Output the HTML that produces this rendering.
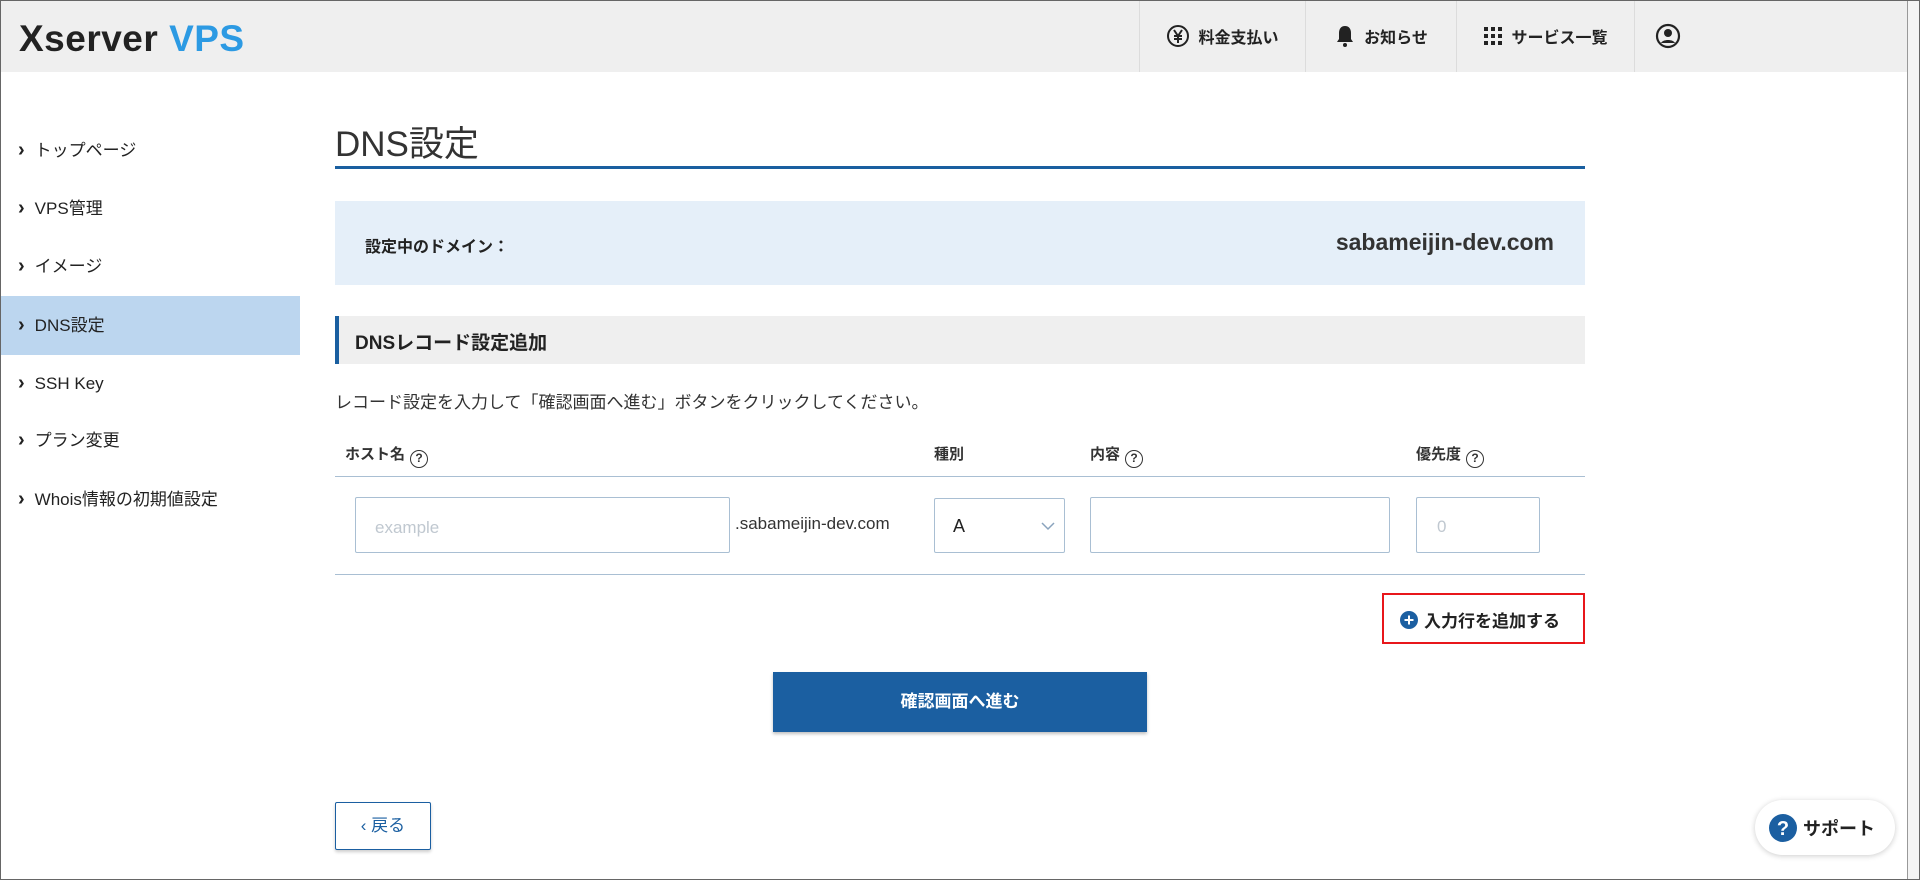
<!DOCTYPE html>
<html><head><meta charset="utf-8"><style>
*{box-sizing:border-box;margin:0;padding:0}
body{width:1920px;height:880px;overflow:hidden;background:#fff;font-family:"Liberation Sans","Noto Sans CJK JP",sans-serif;color:#333;position:relative}
.abs{position:absolute}
.hdr{left:0;top:0;width:1907px;height:72px;background:#efefef}
.logo{left:19px;top:20px;font-size:37px;line-height:37px;font-weight:bold;letter-spacing:0.5px;color:#222}
.logo span{color:#2c9ae3}
.nav{top:0;height:72px;display:flex;align-items:center;justify-content:center;font-size:16px;font-weight:bold;color:#222;border-left:1px solid #dcdcdc;gap:8px}
.side div{position:absolute;left:0;width:300px;height:59px;line-height:59px;padding-left:18px;font-size:17px;color:#222}
.side div:before{content:"›";font-size:20px;margin-right:10px;font-weight:bold}
.q{display:inline-block;width:18px;height:18px;border:1.6px solid #333;border-radius:50%;font-size:12px;line-height:15px;text-align:center;margin-left:5px;vertical-align:-3px}
.inp{border:1px solid #a9bfd3;border-radius:2px;background:#fff}
</style></head><body>
<div class="abs hdr"></div>
<div class="abs logo">Xserver <span>VPS</span></div>
<div class="abs nav" style="left:1139px;width:166px"><svg width="24" height="24" viewBox="0 0 24 24"><circle cx="12" cy="12" r="10" fill="none" stroke="#222" stroke-width="2"/><path d="M8 6l4 6 4-6M12 12v7M8 12h8M8 15h8" stroke="#222" stroke-width="2" fill="none"/></svg>料金支払い</div>
<div class="abs nav" style="left:1305px;width:151px"><svg width="22" height="24" viewBox="0 0 22 24"><path d="M11 2c-4 0-6 3-6 7v6l-2 3h16l-2-3V9c0-4-2-7-6-7z" fill="#222"/><circle cx="11" cy="21" r="2" fill="#222"/></svg>お知らせ</div>
<div class="abs nav" style="left:1456px;width:178px"><svg width="20" height="20" viewBox="0 0 20 20" fill="#222"><rect x="1" y="1" width="4" height="4"/><rect x="8" y="1" width="4" height="4"/><rect x="15" y="1" width="4" height="4"/><rect x="1" y="8" width="4" height="4"/><rect x="8" y="8" width="4" height="4"/><rect x="15" y="8" width="4" height="4"/><rect x="1" y="15" width="4" height="4"/><rect x="8" y="15" width="4" height="4"/><rect x="15" y="15" width="4" height="4"/></svg>サービス一覧</div>
<div class="abs nav" style="left:1634px;width:66px"><svg width="26" height="26" viewBox="0 0 26 26"><circle cx="13" cy="13" r="11" fill="none" stroke="#222" stroke-width="2.2"/><circle cx="13" cy="10" r="4" fill="#222"/><path d="M6 20c2-4 12-4 14 0" fill="#222"/></svg></div>
<div class="abs" style="left:1907px;top:0;width:13px;height:880px;background:#f4f4f4;border-left:1px solid #999"></div>

<div class="side">
<div style="top:121px">トップページ</div>
<div style="top:179px">VPS管理</div>
<div style="top:237px">イメージ</div>
<div style="top:296px;background:#bcd6ef">DNS設定</div>
<div style="top:354px">SSH Key</div>
<div style="top:411px">プラン変更</div>
<div style="top:470px">Whois情報の初期値設定</div>
</div>

<div class="abs" style="left:335px;top:116px;font-size:35px;color:#333">DNS設定</div>
<div class="abs" style="left:335px;top:166px;width:1250px;height:3px;background:#1a5fa0"></div>
<div class="abs" style="left:335px;top:201px;width:1250px;height:84px;background:#e5eff9"></div>
<div class="abs" style="left:365px;top:233px;font-size:16px;font-weight:bold;color:#222">設定中のドメイン：</div>
<div class="abs" style="left:1200px;width:354px;text-align:right;top:229px;font-size:23px;font-weight:bold;color:#333">sabameijin-dev.com</div>
<div class="abs" style="left:335px;top:316px;width:1250px;height:48px;background:#efefef;border-left:4px solid #1a5fa0"></div>
<div class="abs" style="left:355px;top:328px;font-size:19px;font-weight:bold;color:#222">DNSレコード設定追加</div>
<div class="abs" style="left:335px;top:388px;font-size:17px;color:#333">レコード設定を入力して「確認画面へ進む」ボタンをクリックしてください。</div>
<div class="abs" style="left:345px;top:443px;font-size:15px;font-weight:bold">ホスト名<span class="q">?</span></div>
<div class="abs" style="left:934px;top:443px;font-size:15px;font-weight:bold">種別</div>
<div class="abs" style="left:1090px;top:443px;font-size:15px;font-weight:bold">内容<span class="q">?</span></div>
<div class="abs" style="left:1416px;top:443px;font-size:15px;font-weight:bold">優先度<span class="q">?</span></div>
<div class="abs" style="left:335px;top:476px;width:1250px;height:1px;background:#a9bfd3"></div>
<div class="abs inp" style="left:355px;top:497px;width:375px;height:56px;padding:20px 19px;font-size:17px;color:#c0c8d0">example</div>
<div class="abs" style="left:735px;top:514px;font-size:17px;color:#333">.sabameijin-dev.com</div>
<div class="abs inp" style="left:934px;top:498px;width:131px;height:55px;padding:17px 18px;font-size:18px;color:#222">A<svg class="abs" style="left:106px;top:23px" width="14" height="9" viewBox="0 0 14 9"><path d="M1 1l6 6 6-6" stroke="#8aa3bd" stroke-width="1.5" fill="none"/></svg></div>
<div class="abs inp" style="left:1090px;top:497px;width:300px;height:56px"></div>
<div class="abs inp" style="left:1416px;top:497px;width:124px;height:56px;padding:19px 20px;font-size:17px;color:#c0c8d0">0</div>
<div class="abs" style="left:335px;top:574px;width:1250px;height:1px;background:#a9bfd3"></div>
<div class="abs" style="left:1382px;top:593px;width:203px;height:51px;border:2px solid #e8161b"></div>
<div class="abs" style="left:1400px;top:607px;font-size:17px;font-weight:bold;color:#222;display:flex;align-items:center;gap:6px"><svg width="18" height="18" viewBox="0 0 18 18"><circle cx="9" cy="9" r="9" fill="#1b5fa1"/><path d="M9 4.5v9M4.5 9h9" stroke="#fff" stroke-width="2"/></svg>入力行を追加する</div>
<div class="abs" style="left:773px;top:672px;width:374px;height:60px;background:#1b5fa1;color:#fff;font-size:17px;font-weight:bold;text-align:center;line-height:60px;box-shadow:0 2px 3px rgba(0,0,0,.25)">確認画面へ進む</div>
<div class="abs" style="left:335px;top:802px;width:96px;height:48px;border:1px solid #1b5fa1;border-radius:2px;color:#1b5fa1;font-size:17px;text-align:center;line-height:46px;box-shadow:0 2px 3px rgba(0,0,0,.2)">‹ 戻る</div>
<div class="abs" style="left:1755px;top:800px;width:140px;height:55px;border-radius:28px;background:#fff;box-shadow:0 1px 6px rgba(0,0,0,.2);display:flex;align-items:center;padding-left:14px;gap:6px;font-size:18px;font-weight:bold;color:#222"><svg width="28" height="28" viewBox="0 0 28 28"><circle cx="14" cy="14" r="14" fill="#1b5fa1"/><text x="14" y="21" text-anchor="middle" font-size="20" font-weight="bold" fill="#fff" font-family="Liberation Sans">?</text></svg>サポート</div>
<div class="abs" style="left:0;top:0;width:1920px;height:880px;border:1px solid #666;pointer-events:none"></div>
</body></html>
